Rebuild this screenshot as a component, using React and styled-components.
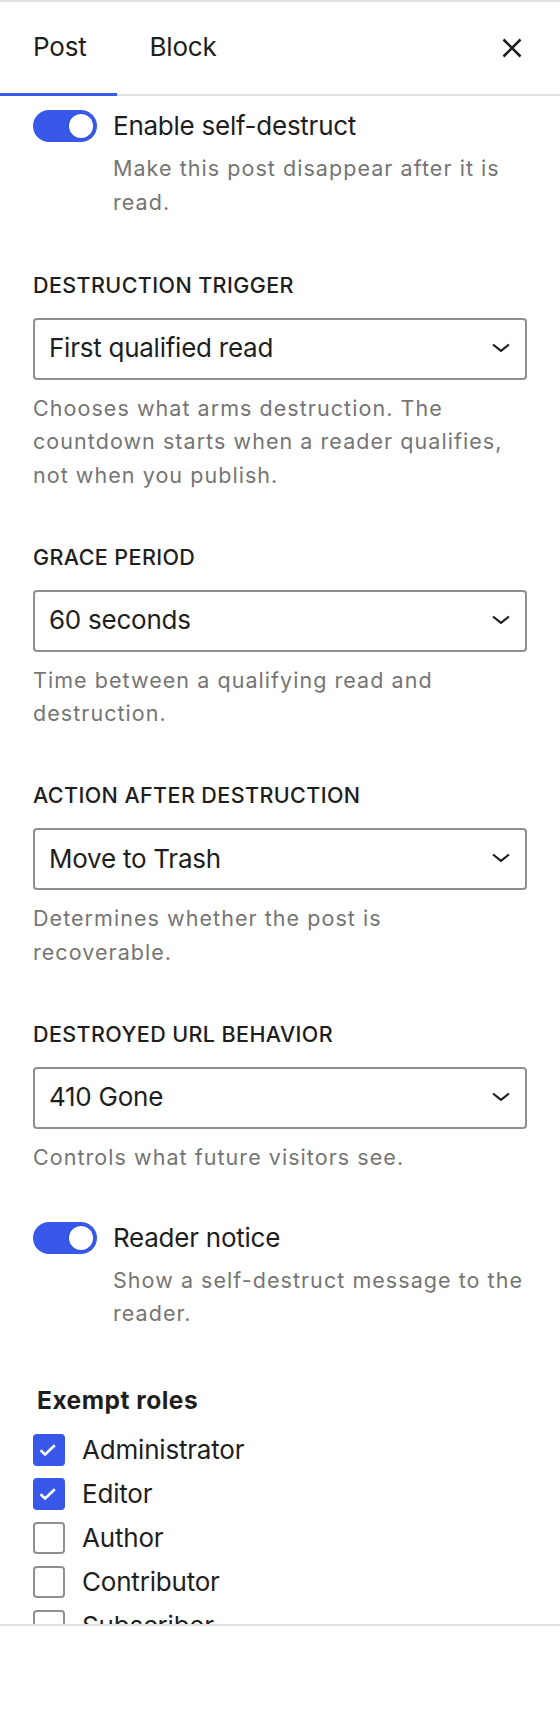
import React, { useState } from "react";
import styled, { createGlobalStyle } from "styled-components";

const GlobalStyle = createGlobalStyle`
  html, body {
    margin: 0;
    padding: 0;
    background: #fff;
  }
  body {
    font-family: Inter, "Noto Sans", "Liberation Sans", sans-serif;
    color: #1e1e1e;
    -webkit-font-smoothing: antialiased;
  }
  * {
    box-sizing: border-box;
  }
`;

const Sidebar = styled.aside`
  width: 560px;
  height: 1728px;
  display: flex;
  flex-direction: column;
  background: #fff;
  border-top: 2px solid #e0e0e0;
  overflow: hidden;
`;

const TabBar = styled.div`
  display: flex;
  align-items: stretch;
  height: 94px;
  flex-shrink: 0;
  border-bottom: 2px solid #e0e0e0;
`;

const Tab = styled.button`
  display: flex;
  align-items: center;
  margin: 0 0 -2px;
  padding: 0 30px 2px 33px;
  border: 0;
  border-bottom: 3px solid ${(p) => (p.$active ? "#3858e9" : "transparent")};
  background: none;
  font: inherit;
  font-size: 26px;
  letter-spacing: -0.2px;
  color: #1e1e1e;
  cursor: pointer;
`;

const Spacer = styled.div`
  flex: 1;
`;

const CloseButton = styled.button`
  display: flex;
  align-items: center;
  justify-content: center;
  width: 48px;
  margin-right: 24px;
  padding: 0;
  border: 0;
  background: none;
  color: #1e1e1e;
  cursor: pointer;
`;

const Scroll = styled.div`
  flex: 1;
  overflow: hidden;
  padding: 14px 33px 0;
`;

const ToggleField = styled.div`
  display: grid;
  grid-template-columns: 64px 1fr;
  column-gap: 16px;
  margin-bottom: ${(p) => p.$after}px;
`;

const Track = styled.button`
  display: flex;
  align-items: center;
  justify-content: ${(p) => (p.$on ? "flex-end" : "flex-start")};
  width: 64px;
  height: 32px;
  padding: 0 4px;
  border: 0;
  border-radius: 16px;
  background: ${(p) => (p.$on ? "#3858e9" : "#949494")};
  cursor: pointer;
`;

const Knob = styled.span`
  width: 24px;
  height: 24px;
  border-radius: 50%;
  background: #fff;
  box-shadow: -1px 0 2px rgba(0, 0, 0, 0.12);
`;

const ToggleLabel = styled.span`
  font-size: 26px;
  line-height: 32px;
  letter-spacing: -0.25px;
`;

const Help = styled.p`
  grid-column: 2;
  margin: ${(p) => p.$gap}px 0 0;
  font-size: 21.5px;
  line-height: 33.5px;
  letter-spacing: 1.05px;
  color: #757575;
`;

const SelectField = styled.div`
  display: flex;
  flex-direction: column;
  margin-bottom: ${(p) => p.$after}px;
`;

const FieldLabel = styled.label`
  font-size: 21.5px;
  font-weight: 500;
  line-height: 28px;
  letter-spacing: 0.4px;
  text-transform: uppercase;
  margin-bottom: 19px;
`;

const SelectBox = styled.button`
  display: flex;
  align-items: center;
  justify-content: space-between;
  width: 100%;
  height: 62px;
  padding: 0 15px 2px 14px;
  border: 2px solid #8f8f8f;
  border-radius: 4px;
  background: #fff;
  font: inherit;
  font-size: 26px;
  letter-spacing: -0.25px;
  color: #1e1e1e;
  text-align: left;
  cursor: pointer;
`;

const Roles = styled.fieldset`
  margin: 0;
  padding: 0;
  border: 0;
`;

const Legend = styled.legend`
  padding: 0 0 0 4px;
  margin-bottom: 18.5px;
  font-size: 24.5px;
  font-weight: 700;
  line-height: 30px;
  letter-spacing: 0.5px;
`;

const RoleList = styled.div`
  display: flex;
  flex-direction: column;
  gap: 12px;
`;

const RoleRow = styled.label`
  display: flex;
  align-items: center;
  gap: 17px;
  font-size: 26px;
  line-height: 32px;
  letter-spacing: -0.2px;
  cursor: pointer;
`;

const Box = styled.span`
  display: flex;
  flex-shrink: 0;
  width: 32px;
  height: 32px;
  border-radius: 4px;
  background: ${(p) => (p.$checked ? "#3858e9" : "#fff")};
  border: ${(p) => (p.$checked ? "none" : "2px solid #8f8f8f")};
`;

const Footer = styled.div`
  height: 104px;
  flex-shrink: 0;
  border-top: 2px solid #e0e0e0;
`;

function Chevron() {
  return (
    <svg width="18" height="10" viewBox="0 0 18 10" fill="none">
      <path d="M1 1.5 9 7.8l8-6.3" stroke="#1e1e1e" strokeWidth="2.2" />
    </svg>
  );
}

function CloseIcon() {
  return (
    <svg width="20" height="20" viewBox="0 0 20 20" fill="none">
      <path d="M1.5 1.5l17 17M18.5 1.5l-17 17" stroke="#1e1e1e" strokeWidth="2.6" />
    </svg>
  );
}

function Check() {
  return (
    <svg width="32" height="32" viewBox="0 0 32 32" fill="none">
      <path d="M7.5 16.2l4.6 4.3L21.8 11.2" stroke="#fff" strokeWidth="2.6" />
    </svg>
  );
}

function Switch({ label, help, on, onChange, after }) {
  return (
    <ToggleField $after={after}>
      <Track $on={on} onClick={onChange} aria-pressed={on}>
        <Knob />
      </Track>
      <ToggleLabel>{label}</ToggleLabel>
      <Help $gap={10}>{help}</Help>
    </ToggleField>
  );
}

function Select({ label, value, help, after }) {
  return (
    <SelectField $after={after}>
      <FieldLabel>{label}</FieldLabel>
      <SelectBox>
        <span>{value}</span>
        <Chevron />
      </SelectBox>
      <Help $gap={12}>{help}</Help>
    </SelectField>
  );
}

const fields = [
  {
    label: "Destruction trigger",
    value: "First qualified read",
    help: "Chooses what arms destruction. The countdown starts when a reader qualifies, not when you publish.",
    after: 50.5,
  },
  {
    label: "Grace period",
    value: "60 seconds",
    help: "Time between a qualifying read and destruction.",
    after: 50.5,
  },
  {
    label: "Action after destruction",
    value: "Move to Trash",
    help: "Determines whether the post is recoverable.",
    after: 50.5,
  },
  {
    label: "Destroyed URL behavior",
    value: "410 Gone",
    help: "Controls what future visitors see.",
    after: 47.5,
  },
];

const roles = ["Administrator", "Editor", "Author", "Contributor", "Subscriber"];

export default function App() {
  const [tab, setTab] = useState("post");
  const [enabled, setEnabled] = useState(true);
  const [notice, setNotice] = useState(true);
  const [exempt, setExempt] = useState(["Administrator", "Editor"]);

  const toggleRole = (role) =>
    setExempt((list) =>
      list.includes(role) ? list.filter((r) => r !== role) : [...list, role]
    );

  return (
    <>
      <GlobalStyle />
      <Sidebar>
        <TabBar>
          <Tab $active={tab === "post"} onClick={() => setTab("post")}>
            Post
          </Tab>
          <Tab $active={tab === "block"} onClick={() => setTab("block")}>
            Block
          </Tab>
          <Spacer />
          <CloseButton aria-label="Close settings">
            <CloseIcon />
          </CloseButton>
        </TabBar>

        <Scroll>
          <Switch
            label="Enable self-destruct"
            help="Make this post disappear after it is read."
            on={enabled}
            onChange={() => setEnabled(!enabled)}
            after={51.5}
          />

          {fields.map((f) => (
            <Select key={f.label} {...f} />
          ))}

          <Switch
            label="Reader notice"
            help="Show a self-destruct message to the reader."
            on={notice}
            onChange={() => setNotice(!notice)}
            after={54.5}
          />

          <Roles>
            <Legend>Exempt roles</Legend>
            <RoleList>
              {roles.map((role) => {
                const checked = exempt.includes(role);
                return (
                  <RoleRow key={role} onClick={() => toggleRole(role)}>
                    <Box $checked={checked}>{checked && <Check />}</Box>
                    {role}
                  </RoleRow>
                );
              })}
            </RoleList>
          </Roles>
        </Scroll>

        <Footer />
      </Sidebar>
    </>
  );
}
